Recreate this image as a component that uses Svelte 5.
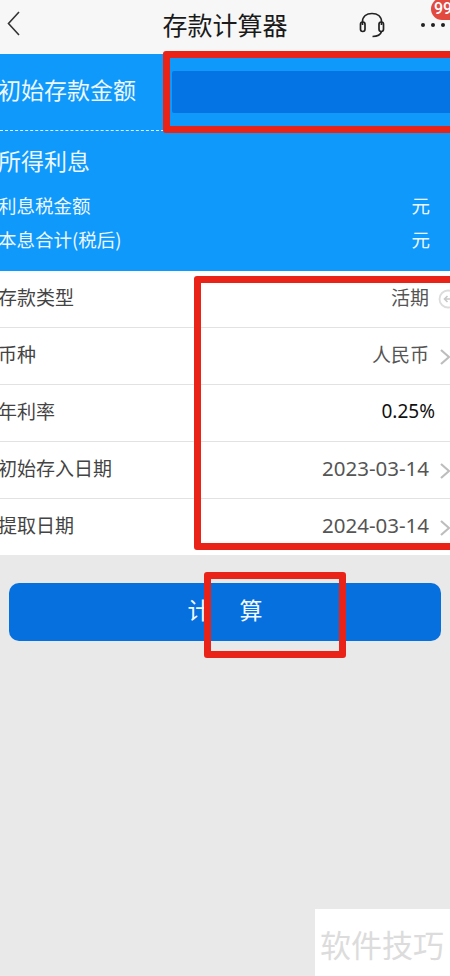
<!-- App.svelte - deposit calculator screen with annotation boxes -->
<script lang="ts">
  const rows = [
    { label: '存款类型', value: '活期', kind: 'clipped' },
    { label: '币种', value: '人民币', kind: 'arrow' },
    { label: '年利率', value: '0.25%', kind: 'rate' },
    { label: '初始存入日期', value: '2023-03-14', kind: 'date' },
    { label: '提取日期', value: '2024-03-14', kind: 'date' },
  ];
</script>

<div class="page">
  <header class="topbar">
    <svg class="back" width="16" height="28" viewBox="0 0 16 28" fill="none">
      <path d="M13 2 L2.5 13.5 L13 25" stroke="#333" stroke-width="1.6" />
    </svg>
    <h1 class="title">存款计算器</h1>
    <svg class="headset" width="28" height="28" viewBox="0 0 28 28" fill="none" stroke="#222" stroke-width="1.7">
      <path d="M4.5 14 V11 C4.5 5.5 8.5 2.5 14 2.5 C19.5 2.5 23.5 5.5 23.5 11 V14" />
      <rect x="2.5" y="11" width="4.5" height="9.5" rx="2.2" />
      <rect x="21" y="11" width="4.5" height="9.5" rx="2.2" />
      <path d="M23.5 20.5 C22.5 24 19.5 25.5 14.5 25.5" />
    </svg>
    <div class="dots"><i></i><i></i><i></i></div>
    <span class="badge">99</span>
  </header>

  <section class="panel">
    <div class="amount">
      <span class="amount-label">初始存款金额</span>
      <div class="amount-input"></div>
    </div>
    <div class="divider"></div>
    <div class="result-title">所得利息</div>
    <div class="result-row"><span>利息税金额</span><span>元</span></div>
    <div class="result-row"><span>本息合计(税后)</span><span>元</span></div>
  </section>

  <section class="list">
    {#each rows as row}
      <div class="row">
        <span class="row-label">{row.label}</span>
        <span class="row-value" class:rate={row.kind === 'rate'} class:date={row.kind === 'date'}>{row.value}</span>
        {#if row.kind === 'arrow' || row.kind === 'date'}
          <svg class="chev" width="12" height="18" viewBox="0 0 12 18" fill="none">
            <path d="M2 2 L10 9 L2 16" stroke="#bdbdbd" stroke-width="2.2" />
          </svg>
        {:else if row.kind === 'clipped'}
          <svg class="round-chev" width="18" height="20" viewBox="0 0 18 20" fill="none">
            <circle cx="10" cy="10" r="8.5" stroke="#dcdcdc" stroke-width="1.8" />
            <path d="M14 10 H7 M9.5 7 L6.5 10 L9.5 13" stroke="#c8c8c8" stroke-width="1.6" />
          </svg>
        {/if}
      </div>
    {/each}
  </section>

  <div class="action">
    <button class="calc">计<span class="gap"></span>算</button>
  </div>

  <div class="mark mark-input"></div>
  <div class="mark mark-list"></div>
  <div class="mark mark-btn"></div>

  <div class="watermark">软件技巧</div>
</div>

<style>
  :global(body) { margin: 0; background: #e9e9e9; }

  .page {
    position: relative; width: 450px; height: 976px; overflow: hidden;
    background: #e9e9e9; color: #333;
    font-family: "Noto Sans CJK SC", "Noto Sans", sans-serif;
  }

  .topbar {
    position: relative; height: 54px; background: #f7f7f7;
    display: flex; align-items: center; box-sizing: border-box;
  }

  .back { position: absolute; left: 6px; top: 10px; }

  .title {
    margin: 0; position: absolute; left: 0; right: 0; top: 6px; text-align: center;
    font-size: 25px; line-height: 36px; font-weight: 400; color: #1a1a1a;
  }

  .headset { position: absolute; left: 358px; top: 11px; }

  .dots { position: absolute; left: 421px; top: 23px; display: flex; gap: 6px; }
  .dots i { width: 4px; height: 4px; border-radius: 50%; background: #222; display: block; }

  .badge {
    position: absolute; left: 431px; top: 0; width: 34px; height: 22px;
    border-radius: 11px; margin-top: -2px; background: #e2493f; color: #fff;
    font-size: 16px; line-height: 22px; padding-left: 3px; box-sizing: border-box;
    font-family: "Roboto", sans-serif; font-weight: 500;
  }

  .panel { height: 217px; background: #0f99fb; color: #fff; }

  .amount { display: flex; align-items: center; height: 76px; }

  .amount-label {
    width: 174px; margin-left: -2px; padding-bottom: 6px; flex: none;
    font-size: 23px; line-height: 30px; color: #eef7ff;
  }

  .amount-input { flex: 1; height: 42px; margin-right: -10px; background: #0474e4; border-radius: 2px; }

  .divider { border-top: 1px dashed #dff1ff; width: 164px; }

  .result-title {
    margin: 13px 0 12px -2px; font-size: 23px; line-height: 32px; color: #eef7ff;
  }

  .result-row {
    display: flex; justify-content: space-between;
    padding-right: 20px; margin-left: -2px; height: 34px; align-items: center;
    font-size: 18.5px; color: #eef7ff;
  }

  .list { background: #fff; height: 284px; }

  .row {
    height: 57px; box-sizing: border-box; border-bottom: 1px solid #e2e2e2;
    display: flex; align-items: center; position: relative; padding: 0 21px 5px 0;
  }
  .row:last-child { border-bottom: none; height: 56px; }

  .row-label { flex: 1; margin-left: -2px; font-size: 19px; color: #444; }

  .row-value { font-size: 19px; color: #555; font-family: "Noto Sans", "Noto Sans CJK SC", sans-serif; }
  .row-value.rate { color: #111; margin-right: -6px; }
  .row-value.date { font-size: 20.5px; }

  .chev { position: absolute; left: 439px; top: 20px; }

  .round-chev { position: absolute; left: 438px; top: 18px; }

  .action { padding: 28px 9px 0; }

  .calc {
    display: flex; align-items: center; justify-content: center;
    width: 100%; height: 58px; border: none; border-radius: 10px; padding: 0 0 7px;
    background: #0670de; color: #f2f8ff; font-family: inherit; font-size: 23px;
  }
  .gap { width: 29px; }

  .mark { position: absolute; box-sizing: border-box; border: 7px solid #ea2318; border-radius: 3px; }
  .mark-input { left: 163px; top: 51px; width: 300px; height: 82px; }
  .mark-list { left: 194px; top: 276px; width: 270px; height: 274px; }
  .mark-btn { left: 204px; top: 572px; width: 142px; height: 86px; }

  .watermark {
    position: absolute; left: 315px; top: 909px; width: 135px; height: 67px;
    background: #fff; color: #dcdcdc; font-size: 31px; line-height: 70px;
    padding-left: 5px; box-sizing: border-box; white-space: nowrap;
  }
</style>
